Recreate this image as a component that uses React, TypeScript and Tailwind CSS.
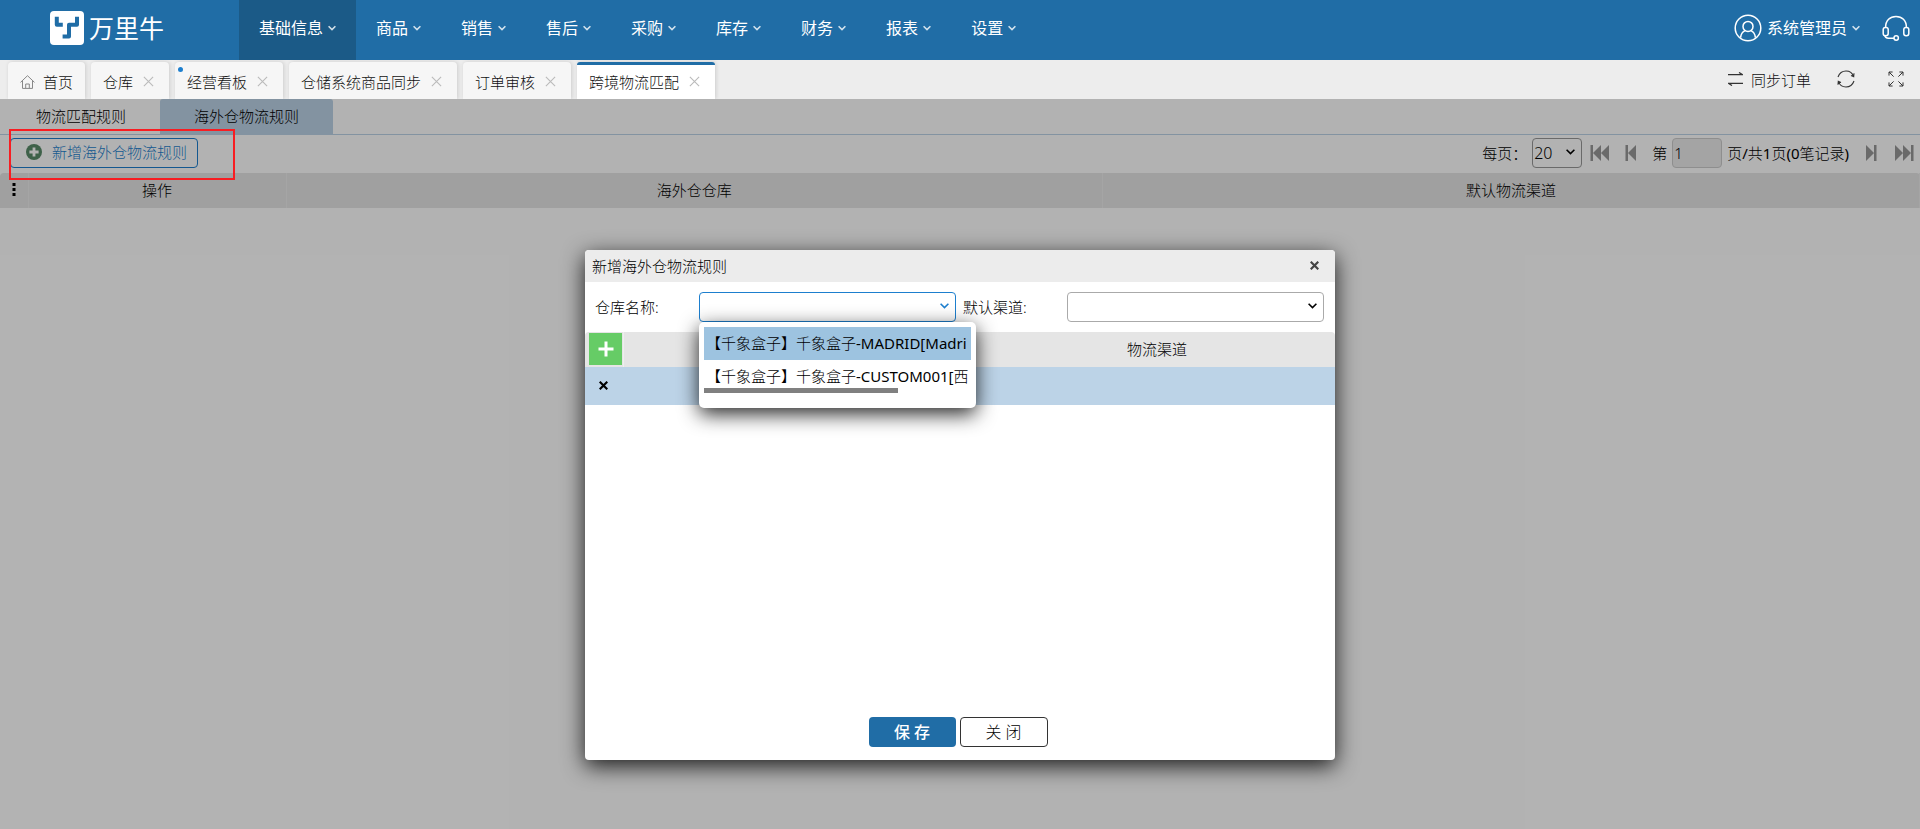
import { useState } from "react";
import type { ReactNode } from "react";

const menus = ["基础信息", "商品", "销售", "售后", "采购", "库存", "财务", "报表", "设置"];

const pageTabs = [
  { label: "仓库" },
  { label: "经营看板", dot: true },
  { label: "仓储系统商品同步" },
  { label: "订单审核" },
  { label: "跨境物流匹配" },
];

const warehouses = ["【千象盒子】千象盒子-MADRID[Madri", "【千象盒子】千象盒子-CUSTOM001[西"];

function Chevron({ className = "" }: { className?: string }) {
  return (
    <svg width="8" height="6" viewBox="0 0 8 6" fill="none" stroke="currentColor" strokeWidth="1.6" className={`opacity-80 ${className}`}>
      <path d="M0.6 1.2 L4 4.6 L7.4 1.2" />
    </svg>
  );
}

function SelectArrow({ className = "" }: { className?: string }) {
  return (
    <svg
      width="9"
      height="6"
      viewBox="0 0 9 6"
      fill="none"
      stroke="currentColor"
      strokeWidth="1.6"
      className={`pointer-events-none absolute top-[11px] right-[7px] ${className}`}
    >
      <path d="M0.6 0.8 L4.5 4.6 L8.4 0.8" />
    </svg>
  );
}

function Cross({ size, width, className = "" }: { size: number; width: number; className?: string }) {
  return (
    <svg width={size} height={size} viewBox="0 0 10 10" stroke="currentColor" strokeWidth={width} className={className}>
      <path d="M0.8 0.8 L9.2 9.2 M9.2 0.8 L0.8 9.2" />
    </svg>
  );
}

function Logo() {
  return (
    <a href="#" className="flex items-center gap-[5px] text-white">
      <svg width="34" height="34" viewBox="0 0 34 34">
        <rect width="34" height="34" rx="4" fill="#fff" />
        <path
          d="M6.8 5.8 V13.8 H12.8 M27 5.8 V13.8 H19 V25.6 H12.6"
          fill="none"
          stroke="#206da6"
          strokeWidth="4"
          strokeLinejoin="round"
        />
      </svg>
      <span className="text-[25px] leading-8 font-normal">万里牛</span>
    </a>
  );
}

function Header() {
  return (
    <header className="flex h-15 items-center justify-between bg-[#206da6] text-base font-normal text-white">
      <div className="flex h-full">
        <div className="flex w-[239px] items-center pr-3 pb-1 pl-[50px]">
          <Logo />
        </div>
        <nav className="flex">
          {menus.map((m, i) => (
            <a
              key={m}
              href="#"
              className={`flex items-center gap-[5px] px-5 pb-1 ${i === 0 ? "bg-[#1b5a87]" : ""}`}
            >
              {m}
              <Chevron />
            </a>
          ))}
        </nav>
      </div>
      <div className="flex items-center gap-[22px] pr-2.5 pb-1">
        <button className="flex items-center gap-[5px]">
          <svg width="28" height="28" viewBox="0 0 28 28" fill="none" stroke="currentColor" strokeWidth="1.5">
            <circle cx="14" cy="14" r="12.8" />
            <circle cx="14" cy="12.4" r="5" />
            <path d="M6.6 23.6 C7 19.8 8.6 17.6 11.2 16.6 M21.4 23.6 C21 19.8 19.4 17.6 16.8 16.6" />
          </svg>
          系统管理员
          <Chevron />
        </button>
        <button aria-label="客服">
          <svg width="28" height="28" viewBox="0 0 28 28" fill="none" stroke="currentColor" strokeWidth="1.5">
            <path d="M3.6 13.4 C3.6 6.4 8 2.4 14 2.4 S24.4 6.4 24.4 13.4" />
            <rect x="1.2" y="13.4" width="5" height="8.4" rx="2.2" />
            <rect x="21.8" y="13.4" width="5" height="8.4" rx="2.2" />
            <path d="M2.6 20.8 Q3.2 24.2 6.4 24.2 H12" />
            <circle cx="14.2" cy="24" r="2.2" />
          </svg>
        </button>
      </div>
    </header>
  );
}

function TabBar() {
  const tab = "relative flex items-center rounded-t bg-[#f6f6f6] pt-0.5 shadow-[1px_0_4px_rgba(0,0,0,0.14)]";
  return (
    <div className="flex h-[39px] items-stretch justify-between overflow-hidden bg-[#ededed] pt-0.5 pl-2 text-[#111]">
      <div className="flex gap-1.5">
        <a href="#" className={`${tab} gap-2 px-3`}>
          <svg width="15" height="14" viewBox="0 0 15 14" fill="none" stroke="#888" strokeWidth="1">
            <path d="M0.5 7.4 L7.5 0.7 L14.5 7.4 M2.5 6 V13.4 H12.5 V6 M5.7 13.4 V9 H9.3 V13.4" />
          </svg>
          首页
        </a>
        {pageTabs.map((t, i) => {
          const active = i === pageTabs.length - 1;
          return (
            <div
              key={t.label}
              className={`${tab} gap-2.5 pr-[15px] pl-3 ${active ? "bg-white before:absolute before:inset-x-0 before:top-0 before:h-[3px] before:rounded-t before:bg-[#206da6]" : ""}`}
            >
              {t.dot && <span className="absolute top-[5px] left-[3px] size-[5px] rounded-full bg-[#1d7fce]" />}
              <a href="#">{t.label}</a>
              <button aria-label="关闭">
                <Cross size={11} width={1} className="text-[#bbb]" />
              </button>
            </div>
          );
        })}
      </div>
      <div className="flex items-center pr-4 pb-1">
        <button className="flex items-center gap-2">
          <svg width="15" height="14" viewBox="0 0 15 14" fill="none" stroke="#333" strokeWidth="1.2">
            <path d="M0 2.6 H14.4 L11 0.4 M15 11.4 H0.6 L4 13.6" />
          </svg>
          <span className="pt-0.5">同步订单</span>
        </button>
        <button className="ml-[26px]" aria-label="刷新">
          <svg width="18" height="18" viewBox="0 0 18 18" fill="none" stroke="#333" strokeWidth="1.1">
            <path d="M1 7 C2.6 2.6 5.6 1 9 1 C12.6 1 15.4 3 16.6 6.6 M17 3.2 L16.7 6.8 L14 5.6 M17 11 C15.4 15.4 12.4 17 9 17 C5.4 17 2.6 15 1.4 11.4 M1 14.8 L1.3 11.2 L4 12.4" />
          </svg>
        </button>
        <button className="ml-[33px]" aria-label="全屏">
          <svg width="16" height="16" viewBox="0 0 16 16" fill="none" stroke="#333" strokeWidth="1">
            <path d="M1 4.6 V1 H4.6 M1 1 L5.6 5.6 M11.4 1 H15 V4.6 M15 1 L10.4 5.6 M1 11.4 V15 H4.6 M1 15 L5.6 10.4 M15 11.4 V15 H11.4 M15 15 L10.4 10.4" />
          </svg>
        </button>
      </div>
    </div>
  );
}

function PageButton({ label, children, width }: { label: string; width: number; children: ReactNode }) {
  return (
    <button aria-label={label} className="text-[#989898]">
      <svg width={width} height="16" viewBox={`0 0 ${width} 16`} fill="currentColor">
        {children}
      </svg>
    </button>
  );
}

function Pager() {
  return (
    <div className="flex items-center">
      <label htmlFor="page-size">每页：</label>
      <div className="relative ml-[5px]">
        <select
          id="page-size"
          className="block h-[30px] w-[50px] appearance-none rounded-[4px] border border-[#999] bg-white pl-px text-base"
        >
          <option>20</option>
        </select>
        <SelectArrow />
      </div>
      <div className="flex items-center gap-4 pl-2">
        <PageButton label="首页" width={19}>
          <path d="M0.5 0 H3 V16 H0.5 Z M11 0 V16 L3 8 Z M19 0 V16 L11 8 Z" />
        </PageButton>
        <PageButton label="上一页" width={11}>
          <path d="M0.5 0 H3 V16 H0.5 Z M11 0 V16 L3 8 Z" />
        </PageButton>
        <label htmlFor="page-no">第</label>
      </div>
      <input
        id="page-no"
        defaultValue="1"
        className="mx-[5px] h-[30px] w-[50px] rounded-[4px] border border-[#ccc] bg-[#ebebeb] pl-px"
      />
      <span className="font-['Noto_Sans','Noto_Sans_CJK_SC_Light','Noto_Sans_CJK_SC',sans-serif] font-normal">
        页/共1页(0笔记录)
      </span>
      <div className="flex items-center gap-[18px] pl-[17px]">
        <PageButton label="下一页" width={11}>
          <path d="M0 0 V16 L8 8 Z M8 0 H10.5 V16 H8 Z" />
        </PageButton>
        <PageButton label="末页" width={19}>
          <path d="M0 0 V16 L8 8 Z M8 0 V16 L16 8 Z M16 0 H18.5 V16 H16 Z" />
        </PageButton>
      </div>
    </div>
  );
}

function RuleList() {
  return (
    <>
      <div className="flex h-9 border-b border-[#bcd3e7]">
        <a href="#" className="flex w-40 items-center justify-center pb-0.5 pl-0.5">
          物流匹配规则
        </a>
        <a href="#" className="flex w-[173px] items-center justify-center rounded-t-[3px] bg-[#bcd3e7] pb-0.5">
          海外仓物流规则
        </a>
      </div>
      <div className="flex h-[38px] items-center justify-between pr-1.5 pb-0.5 pl-2.5">
        <button className="flex h-[30px] items-center gap-2.5 rounded-[4px] border border-[#1d7fce] pr-2.5 pb-0.5 pl-[15px] text-[#1d7fce]">
          <svg width="16" height="16" viewBox="0 0 16 16">
            <circle cx="8" cy="8" r="8" fill="#5a8b69" />
            <path d="M8 3.4 V12.6 M3.4 8 H12.6" stroke="#fff" strokeWidth="2.8" />
          </svg>
          新增海外仓物流规则
        </button>
        <Pager />
      </div>
      <table className="w-full table-fixed text-center">
        <colgroup>
          <col className="w-[28px]" />
          <col className="w-[258px]" />
          <col />
          <col />
        </colgroup>
        <thead>
          <tr className="h-[35px] bg-[#e5e5e5] [&>th]:border-r [&>th]:border-[#ececec] [&>th]:pb-0.5 [&>th]:font-light">
            <th className="rounded-tl-[4px]">
              <svg width="4" height="13" viewBox="0 0 4 13" className="mx-auto" fill="#000">
                <path d="M0.5 0 H3.5 V3 H0.5 Z M0.5 5 H3.5 V8 H0.5 Z M0.5 10 H3.5 V13 H0.5 Z" />
              </svg>
            </th>
            <th>操作</th>
            <th>海外仓仓库</th>
            <th className="rounded-tr-[4px]">默认物流渠道</th>
          </tr>
        </thead>
      </table>
    </>
  );
}

function RuleDialog() {
  const [selected, setSelected] = useState(0);

  return (
    <section
      role="dialog"
      aria-labelledby="dialog-title"
      className="flex min-h-[510px] w-[750px] flex-col rounded-[4px] bg-white shadow-[0_6px_22px_rgba(0,0,0,0.85)]"
    >
      <div className="flex h-8 items-center justify-between rounded-t-[4px] bg-[#ececec] pr-4 pl-[7px]">
        <h2 id="dialog-title">新增海外仓物流规则</h2>
        <button aria-label="关闭" className="pb-0.5 text-[#444]">
          <Cross size={9} width={2.4} />
        </button>
      </div>

      <div className="flex h-[50px] items-center pr-[11px] pl-2.5">
        <label htmlFor="warehouse" className="w-[104px]">
          仓库名称:
        </label>
        <div className="relative">
          <select id="warehouse" className="block h-[30px] w-[257px] appearance-none rounded-[4px] border border-[#1d7fce] bg-white" />
          <SelectArrow className="text-[#1d7fce]" />
          <div className="absolute top-full left-0 z-10 h-[86px] w-[277px] rounded-[5px] bg-white p-[5px] shadow-[0_6px_20px_rgba(0,0,0,0.85)]">
            <ul
              role="listbox"
              className="overflow-hidden font-['Noto_Sans','Noto_Sans_CJK_SC_Light','Noto_Sans_CJK_SC',sans-serif] font-normal whitespace-nowrap"
            >
              {warehouses.map((w, i) => (
                <li
                  key={w}
                  role="option"
                  aria-selected={i === selected}
                  onClick={() => setSelected(i)}
                  className={`pl-0.5 leading-[33px] ${i === 0 ? "h-[33px]" : "h-7"} ${i === selected ? "bg-[#9dc3e0]" : ""}`}
                >
                  {w}
                </li>
              ))}
            </ul>
            <div className="h-[5px] w-[194px] bg-[#808080]" />
          </div>
        </div>
        <label htmlFor="channel" className="ml-[7px] w-[104px]">
          默认渠道:
        </label>
        <div className="relative">
          <select id="channel" className="block h-[30px] w-[257px] appearance-none rounded-[4px] border border-[#aaa] bg-white" />
          <SelectArrow />
        </div>
      </div>

      <table className="w-full table-fixed text-center">
        <colgroup>
          <col className="w-[38px]" />
          <col />
          <col />
        </colgroup>
        <thead>
          <tr className="h-[35px] bg-[#e5e5e5] [&>th]:pb-0.5 [&>th]:font-light">
            <th className="rounded-tl-[4px] border-r border-[#efefef] pl-1">
              <button aria-label="新增" className="flex h-8 w-[33px] items-center justify-center bg-[#66cc66]">
                <svg width="16" height="16" viewBox="0 0 16 16" stroke="#fff" strokeWidth="3">
                  <path d="M8 0.5 V15.5 M0.5 8 H15.5" />
                </svg>
              </button>
            </th>
            <th />
            <th className="rounded-tr-[4px]">物流渠道</th>
          </tr>
        </thead>
        <tbody>
          <tr className="h-[38px] bg-[#bcd3e7]">
            <td className="pr-0.5 pb-0.5">
              <button aria-label="删除" className="flex w-full justify-center">
                <Cross size={9} width={2.4} />
              </button>
            </td>
            <td />
            <td />
          </tr>
        </tbody>
      </table>

      <div className="mt-auto flex justify-center gap-1 pr-1 pb-[13px]">
        <button className="h-[30px] w-[87px] rounded-[4px] bg-[#206da6] text-base font-medium text-white">保 存</button>
        <button className="h-[30px] w-[88px] rounded-[4px] border border-[#333] bg-white text-base">关 闭</button>
      </div>
    </section>
  );
}

export default function App() {
  return (
    <div className="flex min-h-screen flex-col font-['Noto_Sans','Noto_Sans_CJK_SC',sans-serif] text-[15px] leading-5 font-light text-black">
      <Header />
      <TabBar />
      <main className="relative grow bg-white">
        <RuleList />
        <div className="absolute inset-0 z-10 flex items-start justify-center overflow-hidden bg-black/30 pt-[151px]">
          <RuleDialog />
        </div>
        {/* highlight frame around the add button, above the dimmed page */}
        <span className="pointer-events-none absolute top-[30px] left-[9px] z-20 h-[51px] w-[226px] border-2 border-[#f81d22]" />
      </main>
    </div>
  );
}
